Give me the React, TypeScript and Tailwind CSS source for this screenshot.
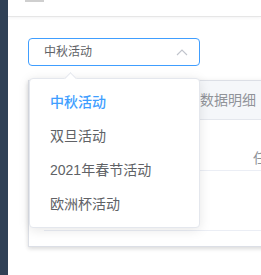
import * as React from 'react';

const activities = ['中秋活动', '双旦活动', '2021年春节活动', '欧洲杯活动'];

const font = 'font-["Liberation_Sans","Noto_Sans_CJK_SC",sans-serif]';

export default function App() {
    const selected = activities[0];

    return (
        <div className={`relative flex w-[261px] h-[275px] overflow-hidden bg-white ${font}`}>
            {/* sidebar */}
            <aside className="w-[8px] shrink-0 bg-[#304156]" />

            <main className="flex flex-col w-[253px] shrink-0 overflow-hidden">
                <header className="h-[17px] shrink-0 border-b border-[#e6e6e6] shadow-[0_1px_3px_rgba(0,21,41,0.05)]">
                    <div className="ml-[17px] w-[19px] h-[2px] bg-[#cfcfcf]" />
                </header>

                <div className="pl-[20px] pt-[21px]">
                    <div className="flex items-center justify-between w-[172px] h-[28px] rounded-[4px] border border-[#409eff] pl-[15px] pr-[11px]">
                        <span className="text-[12px] leading-[16px] text-[#606266]">{selected}</span>
                        <svg width="12" height="7" viewBox="0 0 12 7" fill="none">
                            <polyline points="1,6 6,1 11,6" stroke="#c0c4cc" strokeWidth="1.1" />
                        </svg>
                    </div>
                </div>

                {/* tabs card, mostly covered by the dropdown */}
                <section className="ml-[20px] mt-[14px] w-[600px] shrink-0 border border-[#dcdfe6] bg-white shadow-[0_2px_4px_rgba(0,0,0,0.12),0_0_6px_rgba(0,0,0,0.04)]">
                    <div className="flex h-[39px] bg-[#f5f7fa] border-b border-[#e4e7ed]">
                        <div className="w-[151px] h-[39px] bg-white border-r border-[#dcdfe6]" />
                        <div className="px-[20px] flex items-center text-[14px] text-[#909399]">数据明细</div>
                    </div>
                    <div className="p-[15px]">
                        <div className="border-b border-[#ebeef5]">
                            <div className="flex h-[36px] border-b border-[#ebeef5] text-[14px] leading-[20px] text-[#909399]">
                                <div className="w-[199px]" />
                                <div className="pt-[13px] px-[10px]">任务名称</div>
                            </div>
                            <div className="h-[59px]" />
                        </div>
                    </div>
                </section>
            </main>

            {/* select dropdown */}
            <div className="absolute left-[29px] top-[78px] w-[171px] rounded-[4px] border border-[#e4e7ed] bg-white py-[6px] shadow-[0_2px_12px_rgba(0,0,0,0.1)]">
                <div className="absolute left-[36px] -top-[5px] w-[9px] h-[9px] rotate-45 border-l border-t border-[#e4e7ed] bg-white" />
                {activities.map((name) => (
                    <div
                        key={name}
                        className={`h-[34px] px-[20px] text-[14px] leading-[34px] ${
                            name === selected ? 'text-[#409eff] font-medium' : 'text-[#606266]'
                        }`}
                    >
                        {name}
                    </div>
                ))}
            </div>
        </div>
    );
}
